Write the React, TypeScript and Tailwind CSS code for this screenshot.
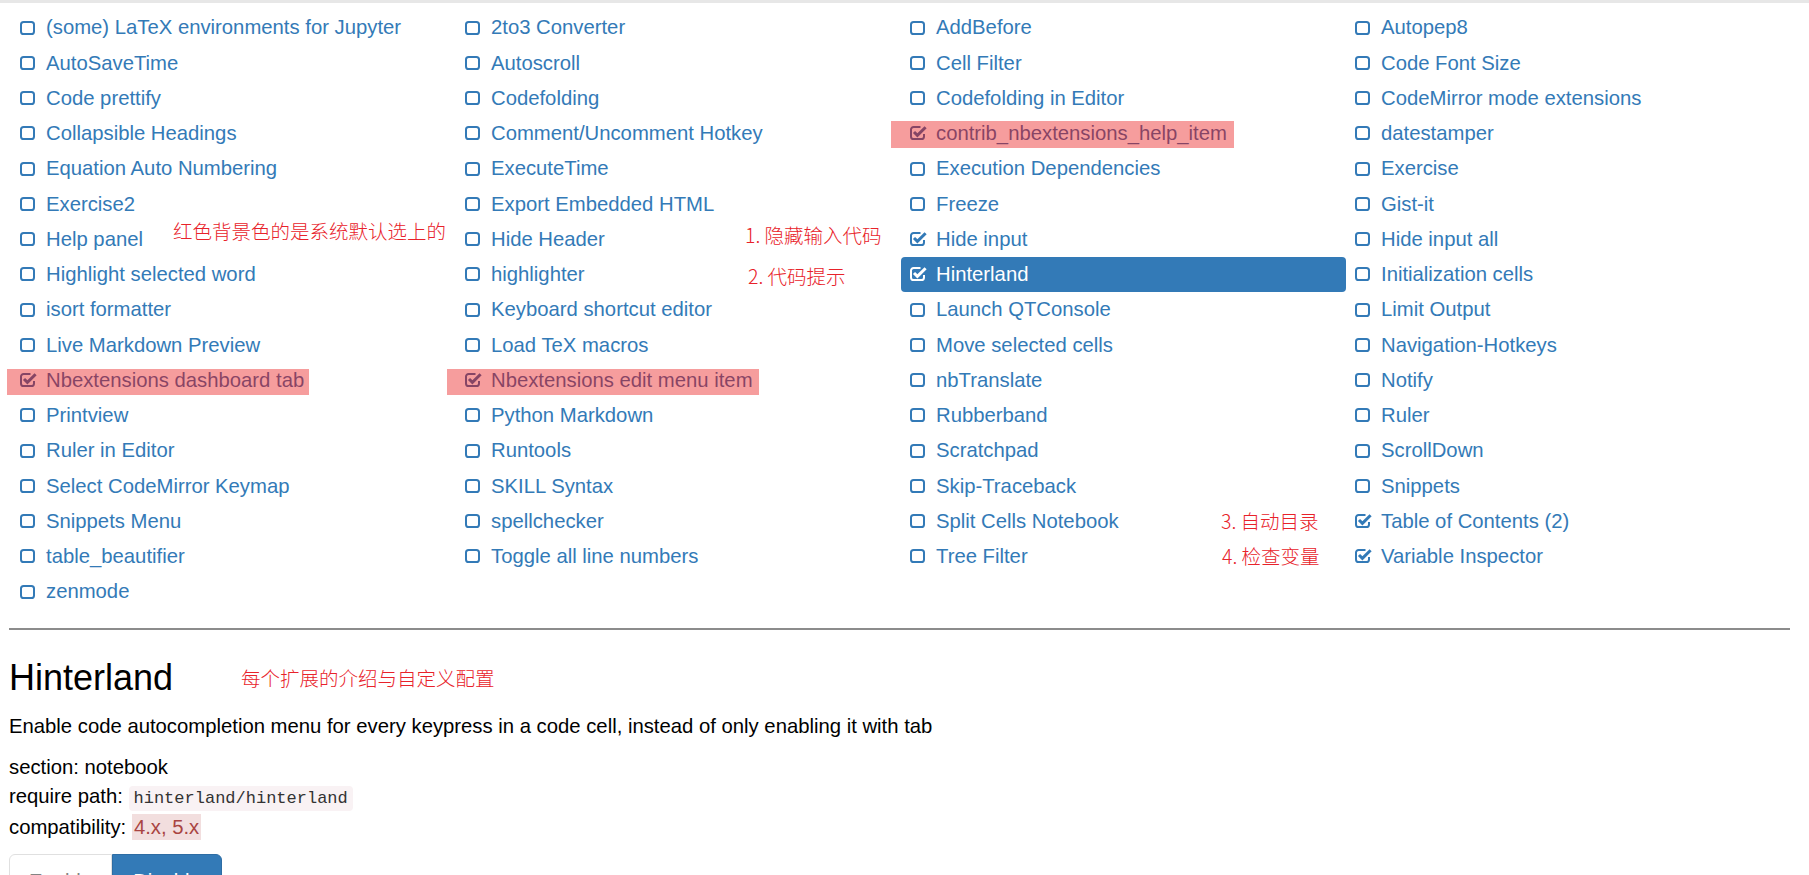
import React from 'react';

type Item = { name: string; checked?: boolean; active?: boolean; pink?: string };

const col1: Item[] = [
  { name: '(some) LaTeX environments for Jupyter' },
  { name: 'AutoSaveTime' },
  { name: 'Code prettify' },
  { name: 'Collapsible Headings' },
  { name: 'Equation Auto Numbering' },
  { name: 'Exercise2' },
  { name: 'Help panel' },
  { name: 'Highlight selected word' },
  { name: 'isort formatter' },
  { name: 'Live Markdown Preview' },
  { name: 'Nbextensions dashboard tab', checked: true, pink: 'left-[-4px] top-[6px] w-[302px] h-[26px]' },
  { name: 'Printview' },
  { name: 'Ruler in Editor' },
  { name: 'Select CodeMirror Keymap' },
  { name: 'Snippets Menu' },
  { name: 'table_beautifier' },
  { name: 'zenmode' },
];

const col2: Item[] = [
  { name: '2to3 Converter' },
  { name: 'Autoscroll' },
  { name: 'Codefolding' },
  { name: 'Comment/Uncomment Hotkey' },
  { name: 'ExecuteTime' },
  { name: 'Export Embedded HTML' },
  { name: 'Hide Header' },
  { name: 'highlighter' },
  { name: 'Keyboard shortcut editor' },
  { name: 'Load TeX macros' },
  { name: 'Nbextensions edit menu item', checked: true, pink: 'left-[-9px] top-[6px] w-[312px] h-[26px]' },
  { name: 'Python Markdown' },
  { name: 'Runtools' },
  { name: 'SKILL Syntax' },
  { name: 'spellchecker' },
  { name: 'Toggle all line numbers' },
];

const col3: Item[] = [
  { name: 'AddBefore' },
  { name: 'Cell Filter' },
  { name: 'Codefolding in Editor' },
  { name: 'contrib_nbextensions_help_item', checked: true, pink: 'left-[-10px] top-[5px] w-[343px] h-[27px]' },
  { name: 'Execution Dependencies' },
  { name: 'Freeze' },
  { name: 'Hide input', checked: true },
  { name: 'Hinterland', checked: true, active: true },
  { name: 'Launch QTConsole' },
  { name: 'Move selected cells' },
  { name: 'nbTranslate' },
  { name: 'Rubberband' },
  { name: 'Scratchpad' },
  { name: 'Skip-Traceback' },
  { name: 'Split Cells Notebook' },
  { name: 'Tree Filter' },
];

const col4: Item[] = [
  { name: 'Autopep8' },
  { name: 'Code Font Size' },
  { name: 'CodeMirror mode extensions' },
  { name: 'datestamper' },
  { name: 'Exercise' },
  { name: 'Gist-it' },
  { name: 'Hide input all' },
  { name: 'Initialization cells' },
  { name: 'Limit Output' },
  { name: 'Navigation-Hotkeys' },
  { name: 'Notify' },
  { name: 'Ruler' },
  { name: 'ScrollDown' },
  { name: 'Snippets' },
  { name: 'Table of Contents (2)', checked: true },
  { name: 'Variable Inspector', checked: true },
];

function SquareIcon() {
  return (
    <svg width="15" height="14" viewBox="0 0 15 14" fill="none">
      <rect x="1" y="1" width="13" height="12" rx="2.6" stroke="currentColor" strokeWidth="2" />
    </svg>
  );
}

function CheckSquareIcon() {
  return (
    <svg width="17" height="14" viewBox="0 0 17 14" fill="none">
      <path
        d="M10.5 1 H3.6 A2.6 2.6 0 0 0 1 3.6 V10.4 A2.6 2.6 0 0 0 3.6 13 H11.4 A2.6 2.6 0 0 0 14 10.4 V8"
        stroke="currentColor"
        strokeWidth="2"
      />
      <path d="M4 6 L7.4 9.4 L15.6 1.2" stroke="currentColor" strokeWidth="3" />
    </svg>
  );
}

function Row({ item }: { item: Item }) {
  const color = item.active ? 'rounded-[4px] bg-[#337ab7] text-white' : item.pink ? 'text-[#1f4f8f]' : 'text-[#337ab7]';
  return (
    <div className={`relative flex h-[35.25px] items-center pl-[9px] ${color}`}>
      <span className="flex w-[26px] shrink-0">
        {item.checked ? <CheckSquareIcon /> : <SquareIcon />}
      </span>
      <span className="whitespace-nowrap">{item.name}</span>
      {item.pink && (
        <div className={`pointer-events-none absolute bg-[rgba(238,60,60,0.5)] ${item.pink}`} />
      )}
    </div>
  );
}

const noteCls =
  "absolute whitespace-nowrap text-[19.5px] font-light leading-[26px] text-[#e8222a] [font-family:'Noto_Sans_CJK_SC',sans-serif]";

export default function App() {
  return (
    <div className="h-[875px] w-full overflow-hidden bg-white text-black [font-family:'Liberation_Sans',Arial,sans-serif] text-[20.3px]">
      <div className="h-[3px] bg-[#e7e7e7]" />
      <div className="relative mt-[7px] pl-[11px]">
        <div className="grid grid-cols-[repeat(4,445px)]">
          {[col1, col2, col3, col4].map((col, i) => (
            <div key={i} className="flex flex-col">
              {col.map((it) => (
                <Row key={it.name} item={it} />
              ))}
            </div>
          ))}
        </div>
        <div className={`${noteCls} left-[173px] top-[208px]`}>红色背景色的是系统默认选上的</div>
        <div className={`${noteCls} left-[745px] top-[212px]`}>1. 隐藏输入代码</div>
        <div className={`${noteCls} left-[748px] top-[253px]`}>2. 代码提示</div>
        <div className={`${noteCls} left-[1221px] top-[498px]`}>3. 自动目录</div>
        <div className={`${noteCls} left-[1222px] top-[533px]`}>4. 检查变量</div>
      </div>

      <div className="pl-[9px] pr-[19px]">
        <div className="mt-[19px] border-t-2 border-[#8c8c8c]" />
      </div>

      <div className="pl-[9px]">
        <div className="mt-[28px] flex items-center">
          <h3 className="text-[36px] leading-[40px] text-black">Hinterland</h3>
          <span className="ml-[68px] whitespace-nowrap text-[19.5px] font-light leading-[26px] text-[#e8222a] [font-family:'Noto_Sans_CJK_SC',sans-serif]">
            每个扩展的介绍与自定义配置
          </span>
        </div>
        <p className="mt-[15px] leading-[26px]">
          Enable code autocompletion menu for every keypress in a code cell, instead of only enabling it with tab
        </p>
        <div className="mt-[14px] leading-[29px]">
          <div>section: notebook</div>
          <div>
            require path:{' '}
            <code className="rounded-[4px] bg-[#f9f2f4] px-[5px] py-[3px] text-[17px] text-[#333] [font-family:'Liberation_Mono',monospace]">
              hinterland/hinterland
            </code>
          </div>
          <div>
            compatibility:{' '}
            <span className="bg-[#f2dede] px-[2px] py-[2px] text-[#a94442]">4.x, 5.x</span>
          </div>
        </div>
        <div className="mt-[12px] flex">
          <button className="rounded-l-[6px] border border-[#cccccc] bg-white px-[19px] pb-[10px] pt-[13px] leading-[26px] text-[#333] opacity-60">
            Enable
          </button>
          <button className="rounded-r-[6px] border border-[#2e6da4] bg-[#337ab7] px-[20px] pb-[10px] pt-[13px] leading-[26px] text-white">
            Disable
          </button>
        </div>
      </div>
    </div>
  );
}
